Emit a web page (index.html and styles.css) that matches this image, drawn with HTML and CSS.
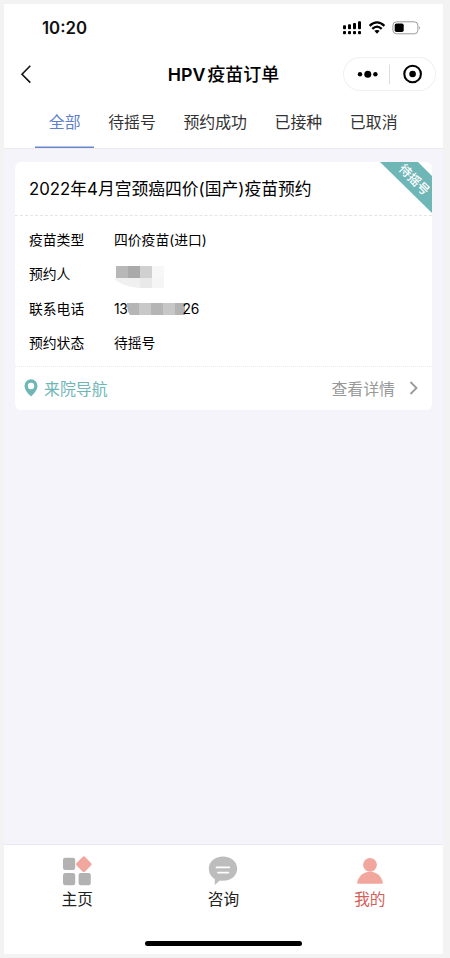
FILE: index.html
```html
<!DOCTYPE html>
<html lang="zh-CN">
<head>
<meta charset="utf-8">
<title>HPV疫苗订单</title>
<link rel="stylesheet" href="styles.css">
</head>
<body>
<div class="phone">
  <header class="header">
    <div class="status">
      <span class="time">10:20</span>
      <svg class="status-icons" width="80" height="16" viewBox="0 0 80 16">
        <g fill="#000">
          <rect x="1" y="5.2" width="3" height="4" rx="1"/><rect x="6" y="4.2" width="3" height="5" rx="1"/><rect x="11" y="3" width="3" height="6.2" rx="1"/><rect x="16" y="1.2" width="3" height="8" rx="1"/>
          <rect x="1" y="11" width="3" height="3.3" rx="1"/><rect x="6" y="11" width="3" height="3.3" rx="1"/><rect x="11" y="11" width="3" height="3.3" rx="1"/><rect x="16" y="11" width="3" height="3.3" rx="1"/>
          <path d="M32.3 10.8Q35 9 37.7 10.8L35 13.8Z"/>
        </g>
        <path d="M27.6 5.8Q35 -1 42.4 5.8M30.3 8.8Q35 4.4 39.7 8.8" fill="none" stroke="#000" stroke-width="2.3"/>
        <rect x="50.9" y="1.8" width="25" height="12" rx="3.6" fill="none" stroke="#999" stroke-width="1"/>
        <rect x="52.7" y="3.5" width="9" height="8.6" rx="1.8"/>
        <path d="M77.3 6q1.6 1.8 0 3.8z" fill="#777"/>
      </svg>
    </div>
    <div class="nav">
      <svg class="back" width="14" height="22" viewBox="0 0 14 22"><path d="M11.3 2.8L3 11.2l8.3 8.4" fill="none" stroke="#111" stroke-width="1.6"/></svg>
      <h1 class="nav-title"><span class="latin">HPV</span>疫苗订单</h1>
      <div class="capsule">
        <svg width="93" height="34" viewBox="0 0 93 34">
          <circle cx="17" cy="17.3" r="2.2"/><circle cx="24.8" cy="17.3" r="3.5"/><circle cx="32.4" cy="17.3" r="2.2"/>
          <path d="M46.5 7.5v20" stroke="#ddd" stroke-width="1"/>
          <circle cx="69.6" cy="17" r="8.3" fill="none" stroke="#000" stroke-width="2.1"/><circle cx="69.6" cy="17" r="3.3"/>
        </svg>
      </div>
    </div>
    <nav class="tabs">
      <a class="tab active">全部</a><a class="tab">待摇号</a><a class="tab">预约成功</a><a class="tab">已接种</a><a class="tab">已取消</a>
    </nav>
  </header>
  <main class="content">
    <article class="card">
      <div class="ribbon"><span>待摇号</span></div>
      <h2 class="card-title">2022年4月宫颈癌四价(国产)疫苗预约</h2>
      <dl class="fields">
        <div class="field"><dt>疫苗类型</dt><dd>四价疫苗(进口)</dd></div>
        <div class="field"><dt>预约人</dt><dd>
          <svg class="name-mask" width="50" height="24" viewBox="0 0 50 24">
            <path d="M1 12h49v10H28Q8 21 1 13z" fill="#f0f0f0"/>
            <path d="M2 0h12v12H2z" fill="#b8b8b8"/><path d="M14 0h12v12H14z" fill="#aaa"/><path d="M26 0h12v12H26z" fill="#d0d0d0"/><path d="M38 0h12v12H38z" fill="#f7f7f7"/>
            <path d="M26 12h12v10H26z" fill="#e9e9e9"/><path d="M38 12h12v10H38z" fill="#f5f5f5"/>
          </svg></dd></div>
        <div class="field"><dt>联系电话</dt><dd class="phone-number">13<svg class="phone-mask" width="58" height="12" viewBox="0 0 58 12">
            <path d="M0 0h12v12H3Q0 8 0 0z" fill="#b5b5b5"/><path d="M12 0h12v12H12z" fill="#c8c8c8"/><path d="M24 0h12v12H24z" fill="#b5b5b5"/><path d="M36 0h12v12H36z" fill="#c7c7c7"/><path d="M48 0h10v12H48z" fill="#b3b3b3"/>
          </svg>26</dd></div>
        <div class="field"><dt>预约状态</dt><dd>待摇号</dd></div>
      </dl>
      <footer class="card-footer">
        <a class="directions"><svg width="14" height="18" viewBox="0 0 14 18"><path fill-rule="evenodd" d="M7 .2A6.500 6.500 0 0 0 .500 6.800C.500 11 4 14.500 7 17.600 10 14.500 13.500 11 13.500 6.800A6.500 6.500 0 0 0 7 .2zM7 3.800a3.200 3.200 0 1 1 0 6.400 3.200 3.200 0 0 1 0-6.400z" fill="#6fb6b7"/></svg>来院导航</a>
        <a class="details">查看详情<svg width="10" height="14" viewBox="0 0 10 14"><path d="M1.500 1l6 6-6 6" fill="none" stroke="#999" stroke-width="1.800"/></svg></a>
      </footer>
    </article>
  </main>
  <footer class="bottom">
    <nav class="tabbar">
      <a class="item"><svg width="30" height="30" viewBox="0 0 30 30"><g fill="#b2b2b2"><rect x="1" y="1.800" width="12.200" height="12.200" rx="2.200"/><rect x="1" y="17" width="12.200" height="12.200" rx="2.200"/><rect x="16.600" y="17" width="12.200" height="12.200" rx="2.200"/></g><rect x="15.800" y="2.200" width="12" height="12" rx="1.800" transform="rotate(45 21.800 8.200)" fill="#f1a79e"/></svg><span>主页</span></a>
      <a class="item"><svg width="30" height="30" viewBox="0 0 30 30"><path d="M15 .4C7 .4.800 5.500.800 12.500c0 4.800 2.600 8.600 6 10.400v6l5-4.300c10 1.200 17.400-4 17.400-12.100C29.200 5.500 23 .4 15 .4z" fill="#bdbdbd"/><path d="M8.500 11.400h12.800M10 16.600h10.400" stroke="#fff" stroke-width="1.800" stroke-linecap="round"/></svg><span>咨询</span></a>
      <a class="item current"><svg width="30" height="30" viewBox="0 0 30 30"><g fill="#f1a79e"><circle cx="15" cy="8.800" r="6.900"/><path d="M2.200 26.400C3.600 19.800 8.600 15.700 15 15.700s11.400 4.100 12.800 10.700q.2 1.400-1.300 1.400H3.500q-1.500 0-1.300-1.400z"/></g></svg><span>我的</span></a>
    </nav>
    <div class="home-indicator"></div>
  </footer>
</div>
</body>
</html>
```
FILE: styles.css
```css
* { box-sizing: border-box; }
body {
  margin: 0;
  padding: 4px 7px 4px 4px;
  height: 958px;
  background: #f3f3f3;
  font-family: Inter, "Noto Sans CJK SC", sans-serif;
  color: #111;
}
h1, h2, dl, dd { margin: 0; }
svg { display: block; flex: none; }
.phone { height: 950px; display: flex; flex-direction: column; background: #f4f4fa; }
.header { height: 145px; background: #fff; border-bottom: 1px solid #ebebef; }
.status { height: 48px; padding: 0 21px 0 38px; display: flex; align-items: center; justify-content: space-between; }
.time { font-size: 16.800px; font-weight: 600; }
.nav { height: 44px; padding: 0 7px 0 15px; display: grid; grid-template-columns: 85px 1fr 93px; align-items: center; }
.nav-title { padding-top: 1px; font-size: 18px; font-weight: 500; line-height: 26px; text-align: center; white-space: nowrap; color: #000; }
.latin { font-weight: 600; font-size: 17.800px; margin-right: 2px; }
.capsule { height: 34px; border-radius: 17px; box-shadow: inset 0 0 0 1px #f0f0f0; }
.tabs { height: 52px; padding-left: 31px; display: flex; }
.tab { height: 52px; padding: 0 13.800px; font-size: 15.900px; line-height: 54px; color: #333; }
.tab.active { color: #5e7fc9; box-shadow: inset 0 -1.500px #6887cc; }
.content { flex: 1; padding: 13px 11px 0; }
.card { position: relative; height: 248px; background: #fff; border-radius: 6px; overflow: hidden; }
.ribbon { position: absolute; top: 0; right: 0; width: 52px; height: 51px; background: #6fb6b7; clip-path: polygon(0 0, 38px 0, 52px 14px, 52px 51px); }
.ribbon span { position: absolute; left: 8px; top: 10px; width: 52px; text-align: center; font-size: 12.500px; line-height: 16px; font-weight: 500; color: #fff; transform: rotate(45deg); }
.card-title { height: 54px; padding-left: 14px; border-bottom: 1px dashed #e5e5e5; font-size: 16.800px; font-weight: 400; line-height: 54px; color: #000; white-space: nowrap; }
.fields { height: 151px; padding: 6px 14px 0; border-bottom: 1px dotted #e9e9e9; font-size: 13.800px; color: #000; }
.field { height: 34.300px; display: flex; align-items: center; }
.field dt { width: 85px; }
.name-mask { margin: 10px 0 0; }
.phone-number { display: flex; align-items: center; padding-top: 2px; letter-spacing: -.3px; }
.phone-mask { margin: 0 -2px 0 -1px; }
.card-footer { height: 42px; padding: 0 13px 0 8.500px; display: flex; align-items: center; justify-content: space-between; font-size: 15.900px; }
.directions, .details { display: flex; align-items: center; }
.directions { gap: 6.500px; color: #6fb6b7; }
.details { gap: 14px; color: #999; }
.bottom { height: 110px; padding-top: 11px; background: #fff; border-top: 1px solid #e9e9f3; }
.tabbar { display: grid; grid-template-columns: repeat(3, 1fr); height: 87px; }
.item { display: flex; flex-direction: column; align-items: center; font-size: 15.700px; line-height: 24px; color: #222; gap: 2px; }
.item.current { color: #d55e5b; }
.home-indicator { width: 157px; height: 5px; margin: -2px auto 0; border-radius: 3px; background: #000; }
```
